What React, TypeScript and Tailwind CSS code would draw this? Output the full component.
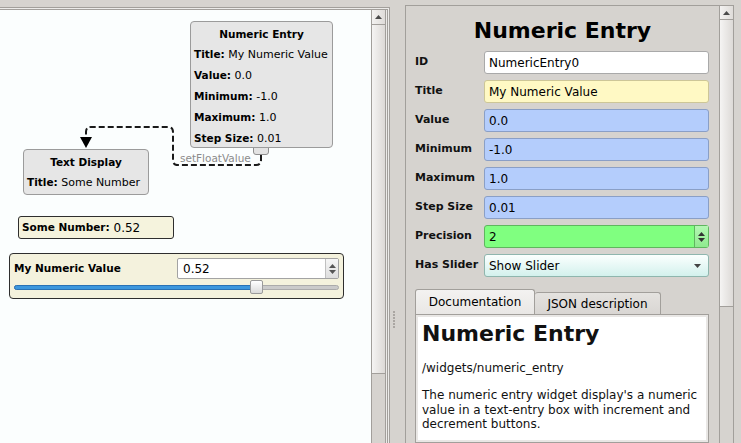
import React from "react";

function UpTri({ color = "#505050" }: { color?: string }) {
  return (
    <svg width="7" height="4" viewBox="0 0 7 4" className="block">
      <polygon points="0,4 3.5,0 7,4" fill={color} />
    </svg>
  );
}
function DownTri({ color = "#505050" }: { color?: string }) {
  return (
    <svg width="7" height="4" viewBox="0 0 7 4" className="block">
      <polygon points="0,0 7,0 3.5,4" fill={color} />
    </svg>
  );
}

function Row({ label, children }: { label: string; children: React.ReactNode }) {
  return (
    <div className="flex items-center h-[23px]">
      <div className="w-[69px] shrink-0 text-[11px] font-bold text-[#111]">{label}</div>
      <div className="flex-1 h-full">{children}</div>
    </div>
  );
}

const nodeRows: [string, string][] = [
  ["Title", "My Numeric Value"],
  ["Value", "0.0"],
  ["Minimum", "-1.0"],
  ["Maximum", "1.0"],
  ["Step Size", "0.01"],
];

export default function App() {
  return (
    <div className="w-[741px] h-[443px] overflow-hidden bg-[#d6d3cf] flex text-black font-['DejaVu_Sans','Liberation_Sans',sans-serif]">
      {/* Left pane */}
      <div className="w-[390px] shrink-0 pt-[7px] flex flex-col">
        <div className="flex-1 border-t border-r border-[#a29f9b] bg-[#ecebe9] pt-px pr-px flex flex-col">
          <div className="flex-1 border-t border-r border-[#a29f9b] flex">
            {/* Canvas */}
            <div className="relative w-[371px] bg-[#fbfefe] overflow-hidden">
              <svg className="absolute inset-0" width="371" height="440">
                <path
                  d="M261 145 L261 150 Q261 155 256 155 L178 155 Q173 155 173 150 L173 122 Q173 117 168 117 L91 117 Q86 117 86 122 L86 128"
                  fill="none"
                  stroke="#1a1a1a"
                  strokeWidth="2"
                  strokeDasharray="6 3"
                />
                <polygon points="80,127 92,127 86,138" fill="#000" />
              </svg>
              <div className="absolute left-[180px] top-[142px] text-[10.5px] leading-[13px] text-[#8c8c8c] whitespace-nowrap">
                setFloatValue
              </div>

              {/* Numeric Entry node */}
              <div className="absolute left-[253px] top-[135px] w-[16px] h-[10px] rounded-b-[3px] border border-[#8f8f8f] bg-[#e3e3e3]" />
              <div className="absolute left-[190px] top-[11px] w-[143px] h-[127px] rounded-[4px] border border-[#9b9b9b] bg-[#e6e6e6] px-[3px] pt-[3px]">
                <div className="text-center font-bold text-[10.5px] leading-[19px]">Numeric Entry</div>
                {nodeRows.map(([k, v]) => (
                  <div key={k} className="leading-[20px] text-[11px] whitespace-nowrap">
                    <span className="font-bold text-[10.5px]">{k}:</span> {v}
                  </div>
                ))}
              </div>

              {/* Text Display node */}
              <div className="absolute left-[23px] top-[139px] w-[126px] h-[46px] rounded-[4px] border border-[#9b9b9b] bg-[#e6e6e6] px-[3px] pt-[3px]">
                <div className="text-center font-bold text-[10.5px] leading-[19px]">Text Display</div>
                <div className="leading-[20px] text-[11px] whitespace-nowrap">
                  <span className="font-bold text-[10.5px]">Title:</span> Some Number
                </div>
              </div>

              {/* Some Number widget */}
              <div className="absolute left-[18px] top-[206px] w-[156px] h-[23px] rounded-[3px] border border-[#2e2e2e] bg-[#f5f3dd] pl-[3px] flex items-center whitespace-nowrap">
                <span className="font-bold text-[10.5px]">Some Number:</span>
                <span className="text-[12px]">&nbsp;0.52</span>
              </div>

              {/* My Numeric Value widget */}
              <div className="absolute left-[9px] top-[243px] w-[335px] h-[46px] rounded-[4px] border border-[#2e2e2e] bg-[#f4f2dd] px-[4px] pt-[4px] flex flex-col">
                <div className="flex items-center justify-between h-[21px]">
                  <span className="font-bold text-[10.5px]">My Numeric Value</span>
                  <div className="w-[162px] h-[21px] border border-[#a3a3a3] rounded-[2px] bg-white flex">
                    <div className="flex-1 pl-[5px] text-[12px] flex items-center">0.52</div>
                    <div className="w-[13px] border-l border-[#c0c0c0] bg-gradient-to-b from-[#f6f6f6] to-[#dedede] flex flex-col items-center justify-center gap-[2px]">
                      <UpTri color="#555" />
                      <DownTri color="#555" />
                    </div>
                  </div>
                </div>
                <div className="relative h-[14px] mt-[1px]">
                  <div className="absolute left-0 right-0 top-[5px] h-[5px] rounded-full bg-[#cacaca] border border-[#ababab]" />
                  <div className="absolute left-0 w-[240px] top-[5px] h-[5px] rounded-full bg-[#3d97dd] border border-[#2a72b4]" />
                  <div className="absolute left-[236px] top-0 w-[13px] h-[14px] rounded-[2px] border border-[#9a9a9a] bg-gradient-to-b from-white to-[#dadada]" />
                </div>
              </div>
            </div>
            {/* Left scrollbar */}
            <div className="w-[15px] flex flex-col border-x border-[#a29f9b] bg-[#d6d3cf]">
              <div className="h-[15px] shrink-0 border-b border-[#a29f9b] bg-gradient-to-r from-[#f3f2f1] to-[#dfdcd9] flex items-center justify-center">
                <UpTri color="#4a4a4a" />
              </div>
              <div className="h-[349px] shrink-0 border-b border-[#a29f9b] bg-gradient-to-r from-[#f5f4f3] to-[#dddad7]" />
            </div>
            <div className="w-px bg-[#ecebe9]" />
          </div>
        </div>
      </div>

      {/* Splitter */}
      <div className="w-[15px] shrink-0 pt-[311px] pl-[3px]">
        <div className="flex flex-col gap-px">
          <div className="w-[2px] h-[2px] bg-[#aaa6a2]" />
          <div className="w-[2px] h-[2px] bg-[#aaa6a2]" />
          <div className="w-[2px] h-[2px] bg-[#aaa6a2]" />
          <div className="w-[2px] h-[2px] bg-[#aaa6a2]" />
          <div className="w-[2px] h-[2px] bg-[#aaa6a2]" />
          <div className="w-[2px] h-[2px] bg-[#aaa6a2]" />
        </div>
      </div>

      {/* Right pane */}
      <div className="w-[329px] shrink-0 mt-[5px] border-t border-x border-[#a29f9b] flex">
        <div className="w-[313px] flex flex-col overflow-hidden">
          <div className="pt-[12px] text-center font-bold text-[22px] leading-[26px]">Numeric Entry</div>
          <div className="mt-[7px] pl-[9px] pr-[10px] flex flex-col gap-[6px]">
            <Row label="ID">
              <div className="h-full rounded-[3px] border border-[#a9a9a9] bg-white px-[4px] flex items-center text-[12px]">NumericEntry0</div>
            </Row>
            <Row label="Title">
              <div className="h-full rounded-[3px] border border-[#cdc697] bg-[#fff9c4] px-[4px] flex items-center text-[12px]">My Numeric Value</div>
            </Row>
            <Row label="Value">
              <div className="h-full rounded-[3px] border border-[#8a9fc6] bg-[#b4cdfc] px-[4px] flex items-center text-[12px]">0.0</div>
            </Row>
            <Row label="Minimum">
              <div className="h-full rounded-[3px] border border-[#8a9fc6] bg-[#b4cdfc] px-[4px] flex items-center text-[12px]">-1.0</div>
            </Row>
            <Row label="Maximum">
              <div className="h-full rounded-[3px] border border-[#8a9fc6] bg-[#b4cdfc] px-[4px] flex items-center text-[12px]">1.0</div>
            </Row>
            <Row label="Step Size">
              <div className="h-full rounded-[3px] border border-[#8a9fc6] bg-[#b4cdfc] px-[4px] flex items-center text-[12px]">0.01</div>
            </Row>
            <Row label="Precision">
              <div className="h-full rounded-[3px] border border-[#5fb65f] bg-[#80ff80] flex text-[12px]">
                <div className="flex-1 px-[4px] flex items-center">2</div>
                <div className="w-[14px] border-l border-[#5fb65f] bg-gradient-to-b from-[#b4f7b4] to-[#8eea8e] flex flex-col items-center justify-center gap-[2px]">
                  <UpTri color="#333" />
                  <DownTri color="#333" />
                </div>
              </div>
            </Row>
            <Row label="Has Slider">
              <div className="h-full rounded-[3px] border border-[#8fb6ae] bg-gradient-to-b from-[#fbfffe] to-[#d3f1ed] pl-[4px] pr-[7px] flex items-center justify-between text-[12px]">
                <span>Show Slider</span>
                <DownTri color="#444" />
              </div>
            </Row>
          </div>

          {/* Tabs */}
          <div className="mt-[12px] pl-[9px] pr-[10px] flex-1 flex flex-col">
            <div className="flex items-end h-[25px]">
              <div className="w-[120px] h-[25px] border border-b-0 border-[#a29f9b] rounded-t-[3px] bg-gradient-to-b from-[#f3f2f1] to-[#e9e7e5] flex items-center justify-center text-[12px]">
                Documentation
              </div>
              <div className="w-[126px] h-[22px] border border-b-0 border-l-0 border-[#a29f9b] rounded-t-[3px] bg-gradient-to-b from-[#e4e2df] to-[#d9d6d3] flex items-center justify-center text-[12px]">
                JSON description
              </div>
            </div>
            <div className="flex-1 border border-[#a29f9b] bg-[#e9e7e5] p-[2px] flex flex-col">
              <div className="flex-1 bg-white px-[4px] pt-[4px] text-[#111]">
                <div className="font-bold text-[22px] leading-[26px] whitespace-nowrap">Numeric Entry</div>
                <div className="mt-[14px] text-[12px] leading-[15px] whitespace-nowrap">/widgets/numeric_entry</div>
                <div className="mt-[12px] text-[12px] leading-[14.5px] whitespace-nowrap">
                  <div>The numeric entry widget display's a numeric</div>
                  <div>value in a text-entry box with increment and</div>
                  <div>decrement buttons.</div>
                </div>
              </div>
            </div>
          </div>
        </div>
        {/* Right scrollbar */}
        <div className="w-[14px] flex flex-col border-l border-[#a29f9b] bg-[#d6d3cf]">
          <div className="h-[14px] shrink-0 border-b border-[#a29f9b] bg-gradient-to-r from-[#f3f2f1] to-[#dfdcd9] flex items-center justify-center">
            <UpTri color="#4a4a4a" />
          </div>
          <div className="h-[287px] shrink-0 border-b border-[#a29f9b] bg-gradient-to-r from-[#f5f4f3] to-[#dddad7]" />
        </div>
      </div>
    </div>
  );
}
